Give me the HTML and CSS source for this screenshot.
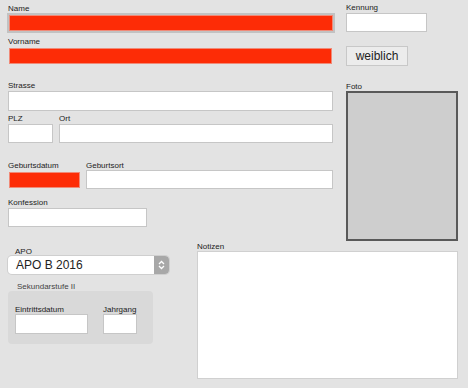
FILE: index.html
```html
<!DOCTYPE html>
<html lang="de">
<head>
    <meta charset="UTF-8">
    <meta name="viewport" content="width=device-width, initial-scale=1.0">
    <title>Schüler</title>
    <link rel="stylesheet" href="styles.css">
</head>
<body>
    <div class="oben">
        <div class="links">
            <label class="lbl lbl-name">Name</label>
            <div class="feld rot fokus name"></div>

            <label class="lbl lbl-vorname">Vorname</label>
            <div class="feld rot vorname"></div>

            <label class="lbl lbl-strasse">Strasse</label>
            <div class="feld strasse"></div>

            <div class="reihe plzort">
                <div>
                    <label class="lbl">PLZ</label>
                    <div class="feld plz"></div>
                </div>
                <div class="wachsen">
                    <label class="lbl">Ort</label>
                    <div class="feld ort"></div>
                </div>
            </div>

            <div class="reihe geburt">
                <div>
                    <label class="lbl">Geburtsdatum</label>
                    <div class="feld rot gebdatum"></div>
                </div>
                <div class="wachsen">
                    <label class="lbl">Geburtsort</label>
                    <div class="feld gebort"></div>
                </div>
            </div>

            <label class="lbl lbl-konf">Konfession</label>
            <div class="feld konfession"></div>
        </div>

        <div class="rechts">
            <label class="lbl lbl-kennung">Kennung</label>
            <div class="feld kennung"></div>
            <button class="knopf">weiblich</button>
            <label class="lbl lbl-foto">Foto</label>
            <div class="foto"></div>
        </div>
    </div>

    <div class="unten">
        <div class="apo">
            <label class="lbl lbl-apo">APO</label>
            <div class="auswahl">
                <span>APO B 2016</span>
                <span class="pfeile">
                    <svg width="7" height="10" viewBox="0 0 7 10"><path d="M1 4 L3.5 1.5 L6 4 M1 6 L3.5 8.5 L6 6" fill="none" stroke="#fff" stroke-width="1.3"/></svg>
                </span>
            </div>
            <label class="lbl lbl-sek">Sekundarstufe II</label>
            <div class="gruppe">
                <div>
                    <label class="lbl">Eintrittsdatum</label>
                    <div class="feld eintritt"></div>
                </div>
                <div>
                    <label class="lbl">Jahrgang</label>
                    <div class="feld jahrgang"></div>
                </div>
            </div>
        </div>
        <div class="notizen">
            <label class="lbl">Notizen</label>
            <div class="feld notizfeld"></div>
        </div>
    </div>
</body>
</html>
```

FILE: styles.css
```css
body {
    margin: 0;
    background-color: #e3e3e3;
    font-family: "Liberation Sans", Arial, Helvetica, sans-serif;
    color: #222;
    width: 468px;
    height: 388px;
    overflow: hidden;
}

.lbl {
    display: block;
    font-size: 8px;
    line-height: 9px;
    height: 9px;
    white-space: nowrap;
}

.feld {
    box-sizing: border-box;
    background: white;
    border: 1px solid #c6c6c6;
}

.rot {
    background: #fd2c06;
    border-color: #f08a78;
}

.fokus {
    box-shadow: 0 0 0 2px #c2c2c2;
}

.oben {
    display: flex;
    height: 241px;
}

.links {
    width: 325px;
    padding-left: 8px;
}

.lbl-name { margin-top: 4px; }

.name {
    margin: 2px 0 0 1px;
    width: 324px;
    height: 16px;
}

.lbl-vorname { margin-top: 6px; }

.vorname {
    margin: 2px 0 0 1px;
    width: 323px;
    height: 16px;
}

.lbl-strasse { margin-top: 17px; }

.strasse {
    margin-top: 1px;
    width: 325px;
    height: 20px;
}

.reihe {
    display: flex;
    gap: 6px;
}

.wachsen {
    flex: 1;
}

.plzort {
    margin-top: 3px;
}

.plz {
    margin-top: 1px;
    width: 45px;
    height: 19px;
}

.ort {
    margin-top: 1px;
    height: 19px;
}

.geburt {
    margin-top: 18px;
}

.gebdatum {
    margin: 2px 0 0 1px;
    width: 71px;
    height: 16px;
}

.gebort {
    height: 19px;
}

.lbl-konf { margin-top: 9px; }

.konfession {
    margin-top: 1px;
    width: 139px;
    height: 19px;
}

.rechts {
    margin-left: 13px;
}

.lbl-kennung { margin-top: 3px; }

.kennung {
    margin-top: 1px;
    width: 81px;
    height: 19px;
}

.knopf {
    display: block;
    margin-top: 14px;
    width: 62px;
    height: 20px;
    padding: 0;
    background: #ececec;
    border: 1px solid #c8c8c8;
    font-family: "Liberation Sans", Arial, Helvetica, sans-serif;
    font-size: 12px;
    color: #222;
}

.lbl-foto { margin-top: 16px; }

.foto {
    box-sizing: border-box;
    width: 112px;
    height: 150px;
    background: #cecece;
    border: 2px solid #595959;
}

.unten {
    display: flex;
}

.apo {
    width: 161px;
    padding-left: 8px;
}

.lbl-apo {
    margin-top: 6px;
    padding-left: 7px;
}

.auswahl {
    box-sizing: border-box;
    display: flex;
    align-items: center;
    justify-content: space-between;
    height: 18px;
    background: white;
    border-radius: 4px;
    box-shadow: 0 0 0 1px #cfcfcf;
    font-size: 12px;
    padding-left: 8px;
}

.pfeile {
    display: flex;
    align-items: center;
    justify-content: center;
    width: 15px;
    height: 18px;
    background: #a8a8a8;
    border-radius: 0 4px 4px 0;
}

.lbl-sek {
    margin-top: 8px;
    padding-left: 9px;
    color: #444;
}

.gruppe {
    display: flex;
    gap: 15px;
    box-sizing: border-box;
    width: 145px;
    height: 53px;
    padding: 14px 0 0 7px;
    background: #d9d9d9;
    border-radius: 4px;
}

.eintritt {
    width: 73px;
    height: 20px;
}

.jahrgang {
    width: 34px;
    height: 20px;
}

.notizen {
    margin-left: 28px;
    margin-top: 1px;
}

.notizfeld {
    width: 261px;
    height: 128px;
    border-color: #d0d0d0;
}
```
